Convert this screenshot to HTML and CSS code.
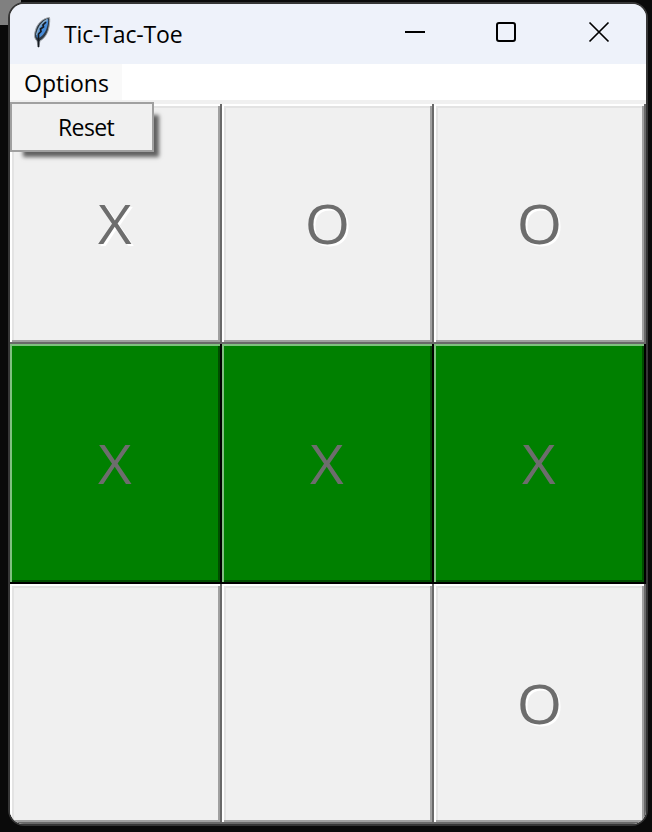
FILE: index.html
```html
<!DOCTYPE html>
<html lang="en">
<head>
<meta charset="utf-8">
<title>Tic-Tac-Toe</title>
<link rel="stylesheet" href="styles.css">
</head>
<body>
<div class="window">
  <header class="titlebar">
    <svg class="feather" width="20" height="34" viewBox="0 0 20 34">
      <path d="M17.500 1.500C11 2 5 8 3.500 14C2 19 2 22 5 25L6.500 31.500L8 25C13 22 16 17 17 11C17.600 7 18 4 17.500 1.500Z" fill="#303a44" stroke="#a4a9ae" stroke-width="1"/>
      <path d="M16 3C11 5 6 11 4.500 18C4 21 5 22 7 22C11 20 14 15 15 11C16 8 16.500 5 16 3Z" fill="#478bd8"/>
      <path d="M15.500 3.500C10 6 6 13 4.500 19" fill="none" stroke="#86aac8" stroke-width="1.400"/>
      <path d="M14 6L11 9L11.500 11L8.500 13L9 15.500L6.500 18L6.500 31" fill="none" stroke="#151a20" stroke-width="1.700"/>
    </svg>
    <h1 class="title">Tic-Tac-Toe</h1>
    <svg class="controls" width="208" height="24" viewBox="0 0 208 24" fill="none" stroke="#000" stroke-width="2">
      <path d="M1 12H21"/>
      <rect x="93" y="3" width="18" height="18" rx="2"/>
      <path d="M185.500 2.500L204.500 21.500M204.500 2.500L185.500 21.500" stroke-width="1.700"/>
    </svg>
  </header>
  <nav class="menubar">
    <div class="menu-item">Options
      <div class="dropdown">Reset</div>
    </div>
  </nav>
  <main class="board">
    <div class="cell"><span class="mark">X</span></div>
    <div class="cell"><span class="mark">O</span></div>
    <div class="cell"><span class="mark">O</span></div>
    <div class="cell win"><span class="mark">X</span></div>
    <div class="cell win"><span class="mark">X</span></div>
    <div class="cell win"><span class="mark">X</span></div>
    <div class="cell"></div>
    <div class="cell"></div>
    <div class="cell"><span class="mark">O</span></div>
  </main>
</div>
</body>
</html>
```
FILE: styles.css
```css
* { box-sizing: border-box; }
body {
  margin: 0;
  height: 832px;
  padding: 2px 4px 6px 8px;
  background: linear-gradient(#808080, #808080) 0 0 / 21px 25px no-repeat #0a0a0a;
  font-family: "Open Sans", "Noto Sans", sans-serif;
  overflow: hidden;
}
.window {
  width: 640px;
  height: 824px;
  border: 2px solid #363636;
  border-radius: 16px;
  background: #f0f0f0;
  overflow: hidden;
}
.titlebar {
  height: 60px;
  background: #eef2fa;
  display: flex;
  align-items: center;
  padding-left: 22px;
}
.feather { display: block; margin-top: -2px; }
.title {
  margin: 0 0 0 12px;
  width: 120px;
  font-size: 23px;
  font-weight: 400;
  letter-spacing: -.15px;
  white-space: nowrap;
}
.controls { display: block; margin: -4px 34px 0 auto; }
.menubar {
  display: flex;
  height: 40px;
  background: #fff;
  border-bottom: 4px solid #f0f0f0;
}
.menu-item {
  position: relative;
  width: 112px;
  padding-left: 14px;
  background: #f9f9f9;
  font-size: 23px;
  line-height: 39px;
}
.dropdown {
  position: absolute;
  left: 0;
  top: 38px;
  width: 144px;
  height: 50px;
  padding-left: 46px;
  border: 2px solid #a0a0a0;
  background: #f0f0f0;
  box-shadow: 9px 9px 4px -4px rgba(0, 0, 0, .6);
  letter-spacing: -.6px;
  line-height: 46px;
}
.board {
  display: grid;
  grid-template-columns: repeat(3, 212px);
  grid-auto-rows: 240px;
}
.cell {
  display: flex;
  align-items: center;
  justify-content: center;
  padding: 0 2px 3px 0;
  background: #f0f0f0;
  box-shadow: inset -2px -2px #696969, inset 2px 2px #fff, inset -4px -4px #a0a0a0, inset 4px 4px #e3e3e3;
  color: #6d6d6d;
  font-size: 55px;
  text-shadow: 2px 2px #fff;
}
.mark { transform: scaleX(1.06); }
.win {
  background: #008000;
  box-shadow: inset -2px -2px #000, inset 2px 2px #80c080, inset -4px -4px #004d00;
  text-shadow: none;
}
```
